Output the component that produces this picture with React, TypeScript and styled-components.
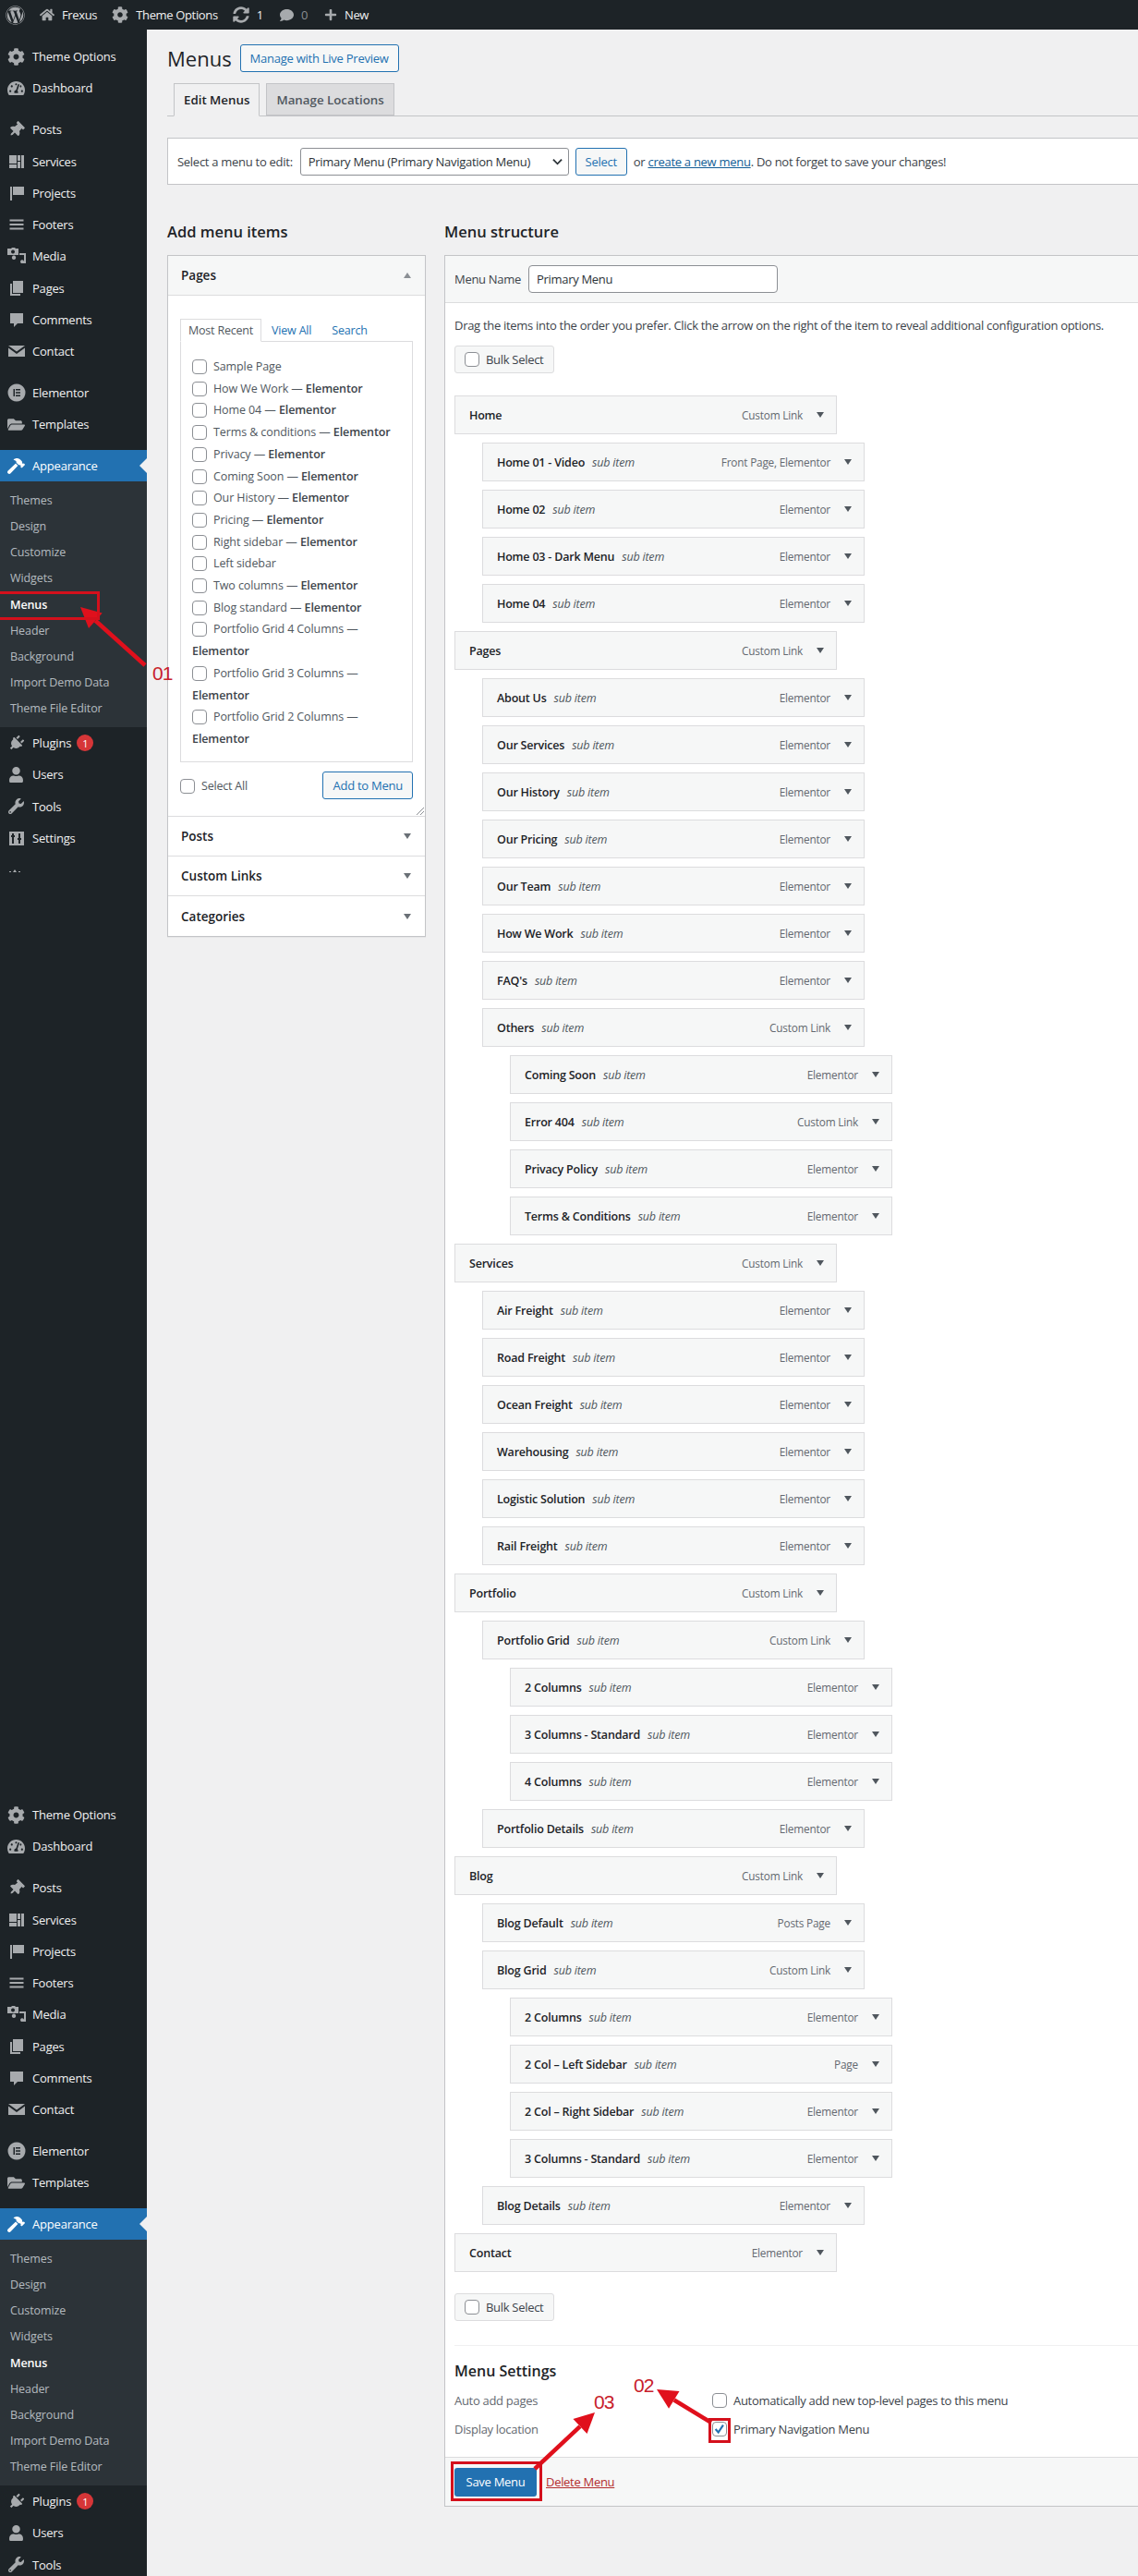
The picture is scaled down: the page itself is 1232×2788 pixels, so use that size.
import React from "react";
import styled, { createGlobalStyle } from "styled-components";
import {
  FaWordpress,
  FaHome,
  FaCog,
  FaSyncAlt,
  FaComment,
  FaPlus,
  FaTachometerAlt,
  FaThumbtack,
  FaHammer,
  FaPlug,
  FaUser,
  FaWrench,
  FaFolderOpen,
} from "react-icons/fa";

const GlobalStyle = createGlobalStyle`
  * { box-sizing: border-box; }
  html, body { margin: 0; padding: 0; background: #f0f0f1; }
  body {
    font-family: "Open Sans", "Liberation Sans", sans-serif;
    font-size: 13px;
    color: #3c434a;
  }
`;

/* small dashicon style drawings */
const Services = () => (
  <svg viewBox="0 0 20 20" width="20" height="20" fill="currentColor">
    <path d="M2 3h8v9H2zM2 13h8v4H2zM11 3h3v6h-3zM15 3h3v14h-3zM11 10h3v7h-3z" />
  </svg>
);
const Flag = () => (
  <svg viewBox="0 0 20 20" width="20" height="20" fill="currentColor">
    <path d="M3 3h2v15H3zM6 3h12v9H6z" />
  </svg>
);
const Lines = () => (
  <svg viewBox="0 0 20 20" width="20" height="20" fill="currentColor">
    <path d="M2.500 4.500h15v2h-15zM2.500 9h15v2h-15zM2.500 13.500h15v2h-15z" />
  </svg>
);
const Media = () => (
  <svg viewBox="0 0 20 20" width="20" height="20" fill="currentColor">
    <path fillRule="evenodd" d="M0 2h4l1-1h3l1 1h3v7H0zM6 3.500a2 2 0 1 0 .01 0zM13 7h7v11h-2V9h-5zM15 18a2 2 0 1 1 3-2v2zM7 14a2.200 2.200 0 1 1 .01 0z" />
  </svg>
);
const Pages = () => (
  <svg viewBox="0 0 20 20" width="20" height="20" fill="currentColor">
    <path d="M6 2h11v13H6zM3 5h2v11h9v2H3z" />
  </svg>
);
const Bubble = () => (
  <svg viewBox="0 0 20 20" width="20" height="20" fill="currentColor">
    <path d="M3 3h14v11h-6l-4 4v-4H3z" />
  </svg>
);
const Mail = () => (
  <svg viewBox="0 0 20 20" width="20" height="20" fill="currentColor">
    <path d="M1 4h18l-9 6.500zM1 6.500l9 6.500 9-6.500V16H1z" />
  </svg>
);
const Elementor = () => (
  <svg viewBox="0 0 20 20" width="20" height="20" fill="currentColor">
    <path fillRule="evenodd" d="M10 .5a9.500 9.500 0 1 0 .01 0zM6.500 6h1.500v8H6.500zM9 6h5v1.500H9zM9 9.300h5v1.500H9zM9 12.500h5V14H9z" />
  </svg>
);
const Sliders = () => (
  <svg viewBox="0 0 20 20" width="20" height="20" fill="currentColor">
    <path fillRule="evenodd" d="M2 3h16v15H2zM5 5v2H4v2h1v7h2V9h1V7H7V5zM12 5v5h-1v2h1v4h2v-4h1v-2h-1V5z" />
  </svg>
);

const PinIcon = styled(FaThumbtack)`
  transform: rotate(45deg);
`;
const PlugIcon = styled(FaPlug)`
  transform: rotate(45deg);
`;

const MENU_TOP = [
  { label: "Theme Options", icon: <FaCog size={19} /> },
  { label: "Dashboard", icon: <FaTachometerAlt size={19} /> },
];
const MENU_CONTENT = [
  { label: "Posts", icon: <PinIcon size={17} /> },
  { label: "Services", icon: <Services /> },
  { label: "Projects", icon: <Flag /> },
  { label: "Footers", icon: <Lines /> },
  { label: "Media", icon: <Media /> },
  { label: "Pages", icon: <Pages /> },
  { label: "Comments", icon: <Bubble /> },
  { label: "Contact", icon: <Mail /> },
];
const MENU_BUILDER = [
  { label: "Elementor", icon: <Elementor /> },
  { label: "Templates", icon: <FaFolderOpen size={19} /> },
];
const SUBMENU = ["Themes", "Design", "Customize", "Widgets", "Menus", "Header", "Background", "Import Demo Data", "Theme File Editor"];

const PAGES: [string, boolean][] = [
  ["Sample Page", false],
  ["How We Work", true],
  ["Home 04", true],
  ["Terms & conditions", true],
  ["Privacy", true],
  ["Coming Soon", true],
  ["Our History", true],
  ["Pricing", true],
  ["Right sidebar", true],
  ["Left sidebar", false],
  ["Two columns", true],
  ["Blog standard", true],
  ["Portfolio Grid 4 Columns", true],
  ["Portfolio Grid 3 Columns", true],
  ["Portfolio Grid 2 Columns", true],
];

const E = "Elementor";
const C = "Custom Link";
const ITEMS: [string, number, string][] = [
  ["Home", 0, C],
  ["Home 01 - Video", 1, "Front Page, Elementor"],
  ["Home 02", 1, E],
  ["Home 03 - Dark Menu", 1, E],
  ["Home 04", 1, E],
  ["Pages", 0, C],
  ["About Us", 1, E],
  ["Our Services", 1, E],
  ["Our History", 1, E],
  ["Our Pricing", 1, E],
  ["Our Team", 1, E],
  ["How We Work", 1, E],
  ["FAQ's", 1, E],
  ["Others", 1, C],
  ["Coming Soon", 2, E],
  ["Error 404", 2, C],
  ["Privacy Policy", 2, E],
  ["Terms & Conditions", 2, E],
  ["Services", 0, C],
  ["Air Freight", 1, E],
  ["Road Freight", 1, E],
  ["Ocean Freight", 1, E],
  ["Warehousing", 1, E],
  ["Logistic Solution", 1, E],
  ["Rail Freight", 1, E],
  ["Portfolio", 0, C],
  ["Portfolio Grid", 1, C],
  ["2 Columns", 2, E],
  ["3 Columns - Standard", 2, E],
  ["4 Columns", 2, E],
  ["Portfolio Details", 1, E],
  ["Blog", 0, C],
  ["Blog Default", 1, "Posts Page"],
  ["Blog Grid", 1, C],
  ["2 Columns", 2, E],
  ["2 Col – Left Sidebar", 2, "Page"],
  ["2 Col – Right Sidebar", 2, E],
  ["3 Columns - Standard", 2, E],
  ["Blog Details", 1, E],
  ["Contact", 0, E],
];

const Arrow = ({ x1, y1, x2, y2 }: { x1: number; y1: number; x2: number; y2: number }) => {
  const a = Math.atan2(y2 - y1, x2 - x1);
  const len = 22;
  const w = 11;
  const bx = x2 - Math.cos(a) * len;
  const by = y2 - Math.sin(a) * len;
  const nx = -Math.sin(a) * w;
  const ny = Math.cos(a) * w;
  return (
    <>
      <line x1={x1} y1={y1} x2={bx} y2={by} stroke="#e0101c" strokeWidth="4.500" />
      <polygon points={`${x2},${y2} ${bx + nx},${by + ny} ${bx - nx},${by - ny}`} fill="#e0101c" />
    </>
  );
};

const SideMenu = ({ collapse }: { collapse?: boolean }) => (
  <MenuBlock>
    {MENU_TOP.map((m) => (
      <MenuRow key={m.label}>
        <MenuIcon>{m.icon}</MenuIcon>
        {m.label}
      </MenuRow>
    ))}
    <MenuGap />
    {MENU_CONTENT.map((m) => (
      <MenuRow key={m.label}>
        <MenuIcon>{m.icon}</MenuIcon>
        {m.label}
      </MenuRow>
    ))}
    <MenuGap />
    {MENU_BUILDER.map((m) => (
      <MenuRow key={m.label}>
        <MenuIcon>{m.icon}</MenuIcon>
        {m.label}
      </MenuRow>
    ))}
    <MenuGap />
    <MenuRow $active>
      <MenuIcon>
        <FaHammer size={19} />
      </MenuIcon>
      Appearance
      <Notch />
    </MenuRow>
    <SubMenu>
      {SUBMENU.map((s) => (
        <SubRow key={s} $current={s === "Menus"}>
          {s}
        </SubRow>
      ))}
    </SubMenu>
    <MenuRow>
      <MenuIcon>
        <PlugIcon size={17} />
      </MenuIcon>
      Plugins
      <Badge>1</Badge>
    </MenuRow>
    <MenuRow>
      <MenuIcon>
        <FaUser size={17} />
      </MenuIcon>
      Users
    </MenuRow>
    <MenuRow>
      <MenuIcon>
        <FaWrench size={17} />
      </MenuIcon>
      Tools
    </MenuRow>
    <MenuRow>
      <MenuIcon>
        <Sliders />
      </MenuIcon>
      Settings
    </MenuRow>
    {collapse && (
      <CollapseDots viewBox="0 0 12 4" width="12" height="4">
        <path d="M0 2h2v1H0zM4 3l2-3 2 3zM10 2h2v1h-2z" fill="#a7aaad" />
      </CollapseDots>
    )}
  </MenuBlock>
);

const App = () => {
  return (
    <Page>
      <GlobalStyle />
      <AdminBar>
        <LogoItem>
          <FaWordpress size={21} />
        </LogoItem>
        <BarItem>
          <FaHome size={16} />
          Frexus
        </BarItem>
        <BarItem>
          <FaCog size={18} />
          Theme Options
        </BarItem>
        <BarItem>
          <FaSyncAlt size={18} />1
        </BarItem>
        <BarItem $push>
          <FaComment size={15} />
          <Dim>0</Dim>
        </BarItem>
        <BarItem $push>
          <FaPlus size={14} />
          New
        </BarItem>
      </AdminBar>
      <Layout>
        <Sidebar>
          <SideMenu collapse />
          <SideMenu />
        </Sidebar>
        <Content>
          <TitleRow>
            <PageTitle>Menus</PageTitle>
            <OutlineButton>Manage with Live Preview</OutlineButton>
          </TitleRow>
          <TabBar>
            <NavTab $active>Edit Menus</NavTab>
            <NavTab>Manage Locations</NavTab>
          </TabBar>
          <SelectBox>
            Select a menu to edit:
            <FakeSelect>
              Primary Menu (Primary Navigation Menu)
              <svg viewBox="0 0 12 8" width="11" height="8">
                <path d="M1 1.500l5 5 5-5" fill="none" stroke="#2c3338" strokeWidth="2" />
              </svg>
            </FakeSelect>
            <OutlineButton $small>Select</OutlineButton>
            <span>
              or <BlueLink>create a new menu</BlueLink>. Do not forget to save your changes!
            </span>
          </SelectBox>
          <Columns>
            <LeftCol>
              <Heading>Add menu items</Heading>
              <Accordion>
                <AccordionHead $open>
                  Pages
                  <Caret $up />
                </AccordionHead>
                <AccordionBody>
                  <InnerTabs>
                    <InnerTab $active>Most Recent</InnerTab>
                    <InnerTab>View All</InnerTab>
                    <InnerTab>Search</InnerTab>
                  </InnerTabs>
                  <PageList>
                    {PAGES.map(([name, el]) => (
                      <PageRow key={name}>
                        <Check />
                        {name}
                        {el && (
                          <>
                            {" — "}
                            <b>Elementor</b>
                          </>
                        )}
                      </PageRow>
                    ))}
                  </PageList>
                  <AddRow>
                    <SelectAll>
                      <Check />
                      Select All
                    </SelectAll>
                    <OutlineButton>Add to Menu</OutlineButton>
                  </AddRow>
                  <Resize viewBox="0 0 8 8" width="8" height="8">
                    <path d="M0 8L8 0M4 8l4-4" stroke="#8c8f94" />
                  </Resize>
                </AccordionBody>
                <AccordionHead>
                  Posts
                  <Caret />
                </AccordionHead>
                <AccordionHead>
                  Custom Links
                  <Caret />
                </AccordionHead>
                <AccordionHead>
                  Categories
                  <Caret />
                </AccordionHead>
              </Accordion>
            </LeftCol>
            <RightCol>
              <Heading>Menu structure</Heading>
              <Panel>
                <PanelHead>
                  Menu Name
                  <NameInput>Primary Menu</NameInput>
                </PanelHead>
                <PanelBody>
                  <Instructions>
                    Drag the items into the order you prefer. Click the arrow on the right of the item to reveal additional
                    configuration options.
                  </Instructions>
                  <BulkSelect>
                    <Check />
                    Bulk Select
                  </BulkSelect>
                  <ItemList>
                    {ITEMS.map(([title, depth, type], i) => (
                      <MenuItem key={i} $depth={depth}>
                        <ItemTitle>{title}</ItemTitle>
                        {depth > 0 && <SubLabel>sub item</SubLabel>}
                        <ItemType>{type}</ItemType>
                        <Caret $dark />
                      </MenuItem>
                    ))}
                  </ItemList>
                  <BulkSelect $tight>
                    <Check />
                    Bulk Select
                  </BulkSelect>
                  <Settings>
                    <SettingsTitle>Menu Settings</SettingsTitle>
                    <SettingsGrid>
                      <span>Auto add pages</span>
                      <SettingValue>
                        <Check />
                        Automatically add new top-level pages to this menu
                      </SettingValue>
                      <span>Display location</span>
                      <SettingValue>
                        <Check>
                          <svg viewBox="0 0 16 16" width="14" height="14">
                            <path d="M3 8l3.500 4L12.500 3" fill="none" stroke="#2271b1" strokeWidth="2.500" />
                          </svg>
                        </Check>
                        Primary Navigation Menu
                      </SettingValue>
                    </SettingsGrid>
                  </Settings>
                </PanelBody>
                <PanelFoot>
                  <SaveButton>Save Menu</SaveButton>
                  <DeleteLink>Delete Menu</DeleteLink>
                </PanelFoot>
              </Panel>
            </RightCol>
          </Columns>
        </Content>
      </Layout>

      <Overlay viewBox="0 0 1232 2788" width="1232" height="2788">
        <Arrow x1={157} y1={720} x2={87} y2={657} />
        <Arrow x1={770} y1={2622} x2={711} y2={2586} />
        <Arrow x1={579} y1={2672} x2={644} y2={2611} />
      </Overlay>
      <RedBox $x={-3} $y={640} $w={111} $h={31} />
      <RedBox $x={767} $y={2617} $w={24} $h={27} />
      <RedBox $x={488} $y={2664} $w={99} $h={43} />
      <Note $x={165} $y={716}>01</Note>
      <Note $x={686} $y={2569}>02</Note>
      <Note $x={643} $y={2587}>03</Note>
    </Page>
  );
};

export default App;

const Page = styled.div`
  position: relative;
  width: 1232px;
  height: 2788px;
  overflow: hidden;
`;

const AdminBar = styled.div`
  display: flex;
  align-items: center;
  height: 32px;
  background: #1d2327;
  color: #f0f0f1;
`;

const LogoItem = styled.div`
  display: flex;
  justify-content: center;
  align-items: center;
  width: 32px;
  margin-right: 3px;
  color: #a7aaad;
`;

const BarItem = styled.div<{ $push?: boolean }>`
  display: flex;
  align-items: center;
  gap: 8px;
  padding: 0 8px;
  margin-left: ${({ $push }) => ($push ? "2px" : "0")};
  letter-spacing: -0.35px;

  svg {
    color: #a7aaad;
  }
`;

const Dim = styled.span`
  color: #8a8e92;
`;

const Layout = styled.div`
  display: flex;
`;

const Sidebar = styled.div`
  width: 159px;
  flex: none;
  background: #1d2327;
`;

const MenuBlock = styled.div`
  height: 1903px;
  padding-top: 12px;
`;

const MenuRow = styled.div<{ $active?: boolean }>`
  position: relative;
  display: flex;
  align-items: center;
  height: 34.25px;
  color: ${({ $active }) => ($active ? "#fff" : "#f0f0f1")};
  background: ${({ $active }) => ($active ? "#2271b1" : "transparent")};
  letter-spacing: -0.2px;

  svg {
    color: ${({ $active }) => ($active ? "#fff" : "#a7aaad")};
  }
`;

const MenuIcon = styled.span`
  display: flex;
  justify-content: center;
  align-items: center;
  width: 35px;
  flex: none;
`;

const MenuGap = styled.div`
  height: 10.7px;
`;

const Notch = styled.span`
  position: absolute;
  right: 0;
  top: 9px;
  border: 8px solid transparent;
  border-right-color: #f0f0f1;
  border-left-width: 0;
`;

const SubMenu = styled.div`
  padding: 6px 0;
  background: #2c3338;
`;

const SubRow = styled.div<{ $current?: boolean }>`
  display: flex;
  align-items: center;
  height: 28.2px;
  padding-left: 11px;
  font-size: 12.5px;
  letter-spacing: -0.1px;
  color: ${({ $current }) => ($current ? "#fff" : "rgba(240, 246, 252, 0.7)")};
  font-weight: ${({ $current }) => ($current ? 600 : 400)};
`;

const Badge = styled.span`
  display: flex;
  justify-content: center;
  align-items: center;
  width: 18px;
  height: 18px;
  margin-left: 6px;
  border-radius: 50%;
  background: #d63638;
  color: #fff;
  font-size: 11px;
`;

const CollapseDots = styled.svg`
  display: block;
  margin: 17px 0 0 10px;
`;

const Content = styled.div`
  flex: none;
  width: 1200px;
  padding-left: 22px;
`;

const TitleRow = styled.div`
  display: flex;
  align-items: center;
  gap: 9px;
  padding-top: 16px;
`;

const PageTitle = styled.h1`
  margin: 0;
  font-size: 22px;
  font-weight: 400;
  line-height: 30px;
  color: #1d2327;
`;

const OutlineButton = styled.div<{ $small?: boolean }>`
  display: flex;
  align-items: center;
  justify-content: center;
  height: 30px;
  padding: 0 10px;
  border: 1px solid #2271b1;
  border-radius: 3px;
  background: #f6f7f7;
  color: #2271b1;
  letter-spacing: -0.25px;
  width: ${({ $small }) => ($small ? "56px" : "auto")};
`;

const TabBar = styled.div`
  display: flex;
  gap: 7px;
  height: 36px;
  margin-top: 12px;
  padding-left: 7px;
  border-bottom: 1px solid #c3c4c7;
`;

const NavTab = styled.div<{ $active?: boolean }>`
  display: flex;
  align-items: center;
  height: ${({ $active }) => ($active ? "36px" : "35px")};
  padding: 0 10px;
  border: 1px solid #c3c4c7;
  border-bottom-color: ${({ $active }) => ($active ? "#f0f0f1" : "#c3c4c7")};
  background: ${({ $active }) => ($active ? "#f0f0f1" : "#dcdcde")};
  color: ${({ $active }) => ($active ? "#1d2327" : "#50575e")};
  font-size: 13.3px;
  font-weight: 600;
`;

const SelectBox = styled.div`
  display: flex;
  align-items: center;
  height: 51px;
  margin-top: 23px;
  padding-left: 10px;
  gap: 7px;
  border: 1px solid #c3c4c7;
  background: #fff;
  letter-spacing: -0.28px;
`;

const FakeSelect = styled.div`
  display: flex;
  align-items: center;
  justify-content: space-between;
  width: 291px;
  height: 30px;
  padding: 0 6px 0 8px;
  margin-left: 1px;
  border: 1px solid #8c8f94;
  border-radius: 3px;
  color: #2c3338;
`;

const BlueLink = styled.a`
  color: #135e96;
  text-decoration: underline;
`;

const Columns = styled.div`
  display: flex;
  gap: 20px;
  margin-top: 39px;
`;

const LeftCol = styled.div`
  width: 280px;
  flex: none;
`;

const RightCol = styled.div`
  width: 800px;
  flex: none;
`;

const Heading = styled.h2`
  margin: 0 0 13px;
  font-size: 16.5px;
  font-weight: 600;
  line-height: 24px;
  color: #1d2327;
`;

const Accordion = styled.div`
  border: 1px solid #c3c4c7;
  background: #fff;
  box-shadow: 0 1px 1px rgba(0, 0, 0, 0.04);
`;

const AccordionHead = styled.div<{ $open?: boolean }>`
  display: flex;
  align-items: center;
  justify-content: space-between;
  height: 43px;
  padding: 0 15px 0 14px;
  border-bottom: 1px solid #dcdcde;
  background: ${({ $open }) => ($open ? "#f6f7f7" : "#fff")};
  color: #1d2327;
  font-size: 13.5px;
  font-weight: 600;

  &:last-child {
    border-bottom: 0;
  }
`;

const Caret = styled.span<{ $up?: boolean; $dark?: boolean }>`
  width: 0;
  height: 0;
  flex: none;
  border-left: 4.5px solid transparent;
  border-right: 4.5px solid transparent;
  border-top: ${({ $up }) => ($up ? "0" : "6px solid #50575e")};
  border-bottom: ${({ $up }) => ($up ? "6px solid #787c82" : "0")};
  opacity: ${({ $dark }) => ($dark ? 1 : 0.85)};
`;

const AccordionBody = styled.div`
  position: relative;
  height: 564px;
  padding: 25px 13px 0;
  border-bottom: 1px solid #dcdcde;
`;

const InnerTabs = styled.div`
  display: flex;
  position: relative;
  z-index: 1;
  height: 25px;
  margin-bottom: -1px;
`;

const InnerTab = styled.div<{ $active?: boolean }>`
  display: flex;
  align-items: center;
  padding: 0 ${({ $active }) => ($active ? "8px" : "10px")};
  height: 25px;
  border: 1px solid ${({ $active }) => ($active ? "#dcdcde" : "transparent")};
  border-bottom-color: ${({ $active }) => ($active ? "#fff" : "transparent")};
  color: ${({ $active }) => ($active ? "#50575e" : "#2271b1")};
  letter-spacing: -0.2px;
  font-size: 12.5px;
`;

const PageList = styled.div`
  height: 456px;
  padding: 15px 12px 0;
  border: 1px solid #dcdcde;
`;

const PageRow = styled.div`
  line-height: 23.7px;
  font-size: 12.5px;
  letter-spacing: -0.1px;
  color: #50575e;

  b {
    font-weight: 600;
    color: #3c434a;
  }
`;

const Check = styled.span`
  display: inline-flex;
  align-items: center;
  justify-content: center;
  width: 16px;
  height: 16px;
  margin-right: 7px;
  vertical-align: -4px;
  border: 1px solid #8c8f94;
  border-radius: 4px;
  background: #fff;
  flex: none;
`;

const AddRow = styled.div`
  display: flex;
  align-items: center;
  justify-content: space-between;
  margin-top: 10px;
`;

const SelectAll = styled.div`
  color: #50575e;
  letter-spacing: -0.2px;
  font-size: 12.5px;
`;

const Resize = styled.svg`
  position: absolute;
  right: 1px;
  bottom: 1px;
`;

const Panel = styled.div`
  border: 1px solid #c3c4c7;
  background: #fff;
`;

const PanelHead = styled.div`
  display: flex;
  align-items: center;
  gap: 8px;
  height: 51px;
  padding-left: 10px;
  border-bottom: 1px solid #dcdcde;
  background: #f6f7f7;
  letter-spacing: -0.3px;
`;

const NameInput = styled.div`
  display: flex;
  align-items: center;
  width: 270px;
  height: 30px;
  padding-left: 8px;
  border: 1px solid #8c8f94;
  border-radius: 4px;
  background: #fff;
  color: #2c3338;
`;

const PanelBody = styled.div`
  padding: 14px 10px 0;
`;

const Instructions = styled.div`
  line-height: 20px;
  letter-spacing: -0.3px;
  white-space: nowrap;
`;

const BulkSelect = styled.div<{ $tight?: boolean }>`
  display: flex;
  align-items: center;
  width: 108px;
  height: 30px;
  margin: ${({ $tight }) => ($tight ? "23px 0 0" : "12px 0 24px")};
  padding-left: 10px;
  border: 1px solid #dcdcde;
  border-radius: 3px;
  background: #f6f7f7;
  letter-spacing: -0.3px;
`;

const ItemList = styled.div`
  display: flex;
  flex-direction: column;
  gap: 9px;
`;

const MenuItem = styled.div<{ $depth: number }>`
  display: flex;
  align-items: center;
  width: 414px;
  height: 42px;
  margin-left: ${({ $depth }) => $depth * 30}px;
  padding: 0 13px 0 15px;
  border: 1px solid #dcdcde;
  background: #f6f7f7;
`;

const ItemTitle = styled.span`
  font-size: 12.5px;
  font-weight: 600;
  letter-spacing: -0.2px;
  color: #1d2327;
`;

const SubLabel = styled.span`
  margin-left: 8px;
  font-size: 12.5px;
  font-style: italic;
  letter-spacing: -0.2px;
  color: #50575e;
`;

const ItemType = styled.span`
  margin: 0 15px 0 auto;
  font-size: 11.8px;
  letter-spacing: -0.2px;
  color: #646970;
`;

const Settings = styled.div`
  margin-top: 26px;
  padding-top: 16px;
  border-top: 1px solid #f0f0f1;
`;

const SettingsTitle = styled.h3`
  margin: 0;
  font-size: 16px;
  font-weight: 600;
  line-height: 22px;
  color: #1d2327;
`;

const SettingsGrid = styled.div`
  display: grid;
  grid-template-columns: 279px 1fr;
  grid-auto-rows: 31px;
  align-items: center;
  margin: 5px 0 15px;
  letter-spacing: -0.3px;
  color: #646970;
`;

const SettingValue = styled.div`
  display: flex;
  align-items: center;
  color: #3c434a;
`;

const PanelFoot = styled.div`
  display: flex;
  align-items: center;
  gap: 10px;
  height: 53px;
  padding-left: 10px;
  border-top: 1px solid #dcdcde;
  background: #f6f7f7;
  letter-spacing: -0.3px;
`;

const SaveButton = styled.div`
  display: flex;
  justify-content: center;
  align-items: center;
  width: 89px;
  height: 31px;
  border-radius: 3px;
  background: #2271b1;
  color: #fff;
`;

const DeleteLink = styled.a`
  color: #b32d2e;
  text-decoration: underline;
`;

const Overlay = styled.svg`
  position: absolute;
  left: 0;
  top: 0;
  pointer-events: none;
`;

const RedBox = styled.div<{ $x: number; $y: number; $w: number; $h: number }>`
  position: absolute;
  left: ${({ $x }) => $x}px;
  top: ${({ $y }) => $y}px;
  width: ${({ $w }) => $w}px;
  height: ${({ $h }) => $h}px;
  border: 3px solid #d4101c;
`;

const Note = styled.div<{ $x: number; $y: number }>`
  position: absolute;
  left: ${({ $x }) => $x}px;
  top: ${({ $y }) => $y}px;
  font-family: "Liberation Sans", sans-serif;
  font-size: 21px;
  line-height: 26px;
  letter-spacing: -1px;
  color: #c8202a;
`;
